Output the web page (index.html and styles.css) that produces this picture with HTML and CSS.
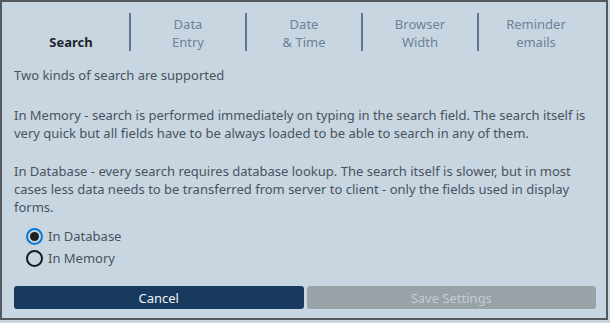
FILE: index.html
```html
<!DOCTYPE html>
<html lang="en">
<head>
    <meta charset="UTF-8">
    <meta name="viewport" content="width=device-width, initial-scale=1.0">
    <title>Settings</title>
    <link rel="stylesheet" href="styles.css">
</head>
<body>

<div class="dialog">
    <div class="tabs">
        <div class="tab active">Search</div>
        <div class="tab">Data<br>Entry</div>
        <div class="tab">Date<br>&amp; Time</div>
        <div class="tab">Browser<br>Width</div>
        <div class="tab">Reminder<br>emails</div>
    </div>

    <div class="content">
        <p>Two kinds of search are supported</p>
        <p class="memory">In Memory - search is performed immediately on typing in the search field. The search itself is very quick but all fields have to be always loaded to be able to search in any of them.</p>
        <p>In Database - every search requires database lookup. The search itself is slower, but in most cases less data needs to be transferred from server to client - only the fields used in display forms.</p>

        <div class="options">
            <label class="radio">
                <input type="radio" name="searchMode" checked>
                <span class="dot"></span> In Database
            </label>
            <label class="radio">
                <input type="radio" name="searchMode">
                <span class="dot"></span> In Memory
            </label>
        </div>
    </div>

    <div class="buttons">
        <button class="btn cancel">Cancel</button>
        <button class="btn save" disabled>Save Settings</button>
    </div>
</div>

</body>
</html>
```

FILE: styles.css
```css
body {
    margin: 0;
    background-color: #c8d6e1;
    font-family: "Noto Sans", "Open Sans", sans-serif;
    font-size: 13px;
    color: #48535e;
}

.dialog {
    width: 604px;
    height: 316px;
    border: 2px solid #555a5e;
    background-color: #c8d6e1;
    display: flex;
    flex-direction: column;
}

/* Tab strip */
.tabs {
    display: flex;
    padding: 11px 0 0 11px;
}
.tab {
    width: 116px;
    height: 38px;
    display: flex;
    align-items: center;
    justify-content: center;
    text-align: center;
    line-height: 18px;
    padding-top: 1px;
    color: #6b8299;
    border-left: 2px solid #5f7890;
    box-sizing: border-box;
}
.tab:first-child {
    border-left: none;
}
.tab.active {
    color: #1e252b;
    font-weight: bold;
    padding-top: 19px;
}

/* Text */
.content {
    padding: 0 12px;
    flex: 1;
}
.content p {
    margin: 15px 0 0;
    line-height: 18px;
}
.content p + p {
    margin-top: 20px;
}
.content p.memory {
    margin-top: 22px;
}

/* Radio buttons */
.options {
    margin: 9px 0 0 12px;
}
.radio {
    display: flex;
    align-items: center;
    height: 22px;
    color: #48535e;
}
.radio input {
    display: none;
}
.dot {
    width: 13px;
    height: 13px;
    border: 2px solid #1a1a1a;
    border-radius: 50%;
    margin-right: 5px;
    position: relative;
}
.radio input:checked + .dot {
    border-color: #0b78d6;
}
.radio input:checked + .dot:before {
    content: "";
    position: absolute;
    width: 9px;
    height: 9px;
    left: 2px;
    top: 2px;
    border-radius: 50%;
    background-color: #1f1f1f;
}

/* Buttons */
.buttons {
    display: flex;
    gap: 3px;
    padding: 0 10px 9px 12px;
}
.btn {
    flex: 1;
    height: 23px;
    border: none;
    border-radius: 3px;
    font-family: inherit;
    font-size: 13px;
    padding: 0;
}
.cancel {
    background-color: #173a5e;
    color: #f2f4f6;
}
.save {
    background-color: #99a2a7;
    color: #c3ccd2;
}
```
